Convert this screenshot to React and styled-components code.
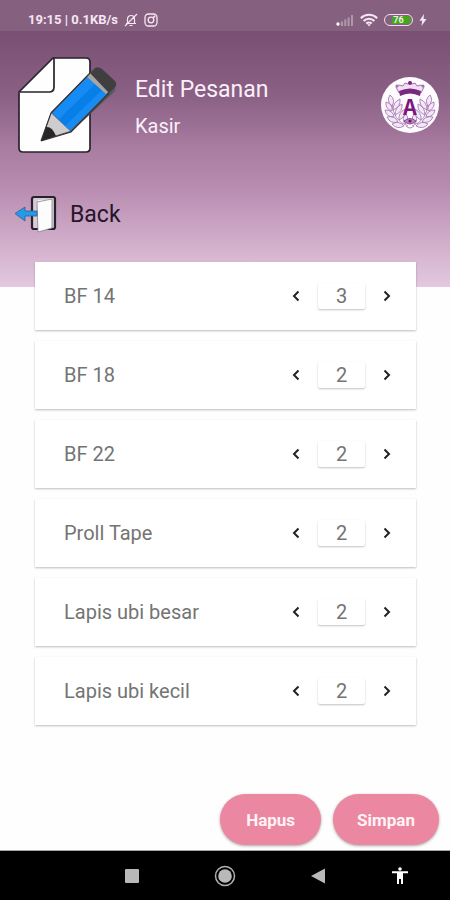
import * as React from "react";
import {useState} from "react";
import styled, {createGlobalStyle} from "styled-components";

const GlobalStyle = createGlobalStyle`
  *, *::before, *::after {
    box-sizing: border-box;
  }
  body {
    margin: 0;
    background: #fefefe;
    font-family: Roboto, "Liberation Sans", sans-serif;
  }
  button, input {
    font-family: inherit;
  }
`;

const Screen = styled.div`
  display: flex;
  flex-direction: column;
  min-height: 100vh;
`;

const StatusBar = styled.div`
  display: flex;
  justify-content: space-between;
  align-items: center;
  height: 31px;
  padding: 8px 23px 0 28px;
  background: #86617f;
  color: #f6e6f4;
  font-size: 13px;
  line-height: 16px;
  font-weight: 700;
`;

const StatusGroup = styled.div`
  display: flex;
  align-items: center;
  gap: 6px;
`;

const Battery = styled.span`
  display: flex;
  justify-content: center;
  width: 29px;
  height: 12px;
  border: 1px solid #f0dcee;
  border-radius: 6px;
  background: linear-gradient(to right, transparent 7px, #43a61c 7px);
  background-clip: content-box;
  padding: 1px;
  font-size: 9px;
  line-height: 9px;
`;

const Header = styled.header`
  display: flex;
  flex-direction: column;
  height: 256px;
  padding: 24px 11px 0 14px;
  background: linear-gradient(
    #795072 0%,
    #8a6084 25%,
    #a87ba1 45%,
    #b98db1 62%,
    #d5b3cf 86%,
    #e2c8e0 100%
  );
`;

const TitleRow = styled.div`
  display: flex;
  align-items: center;
  gap: 16px;
`;

const Titles = styled.div`
  flex: 1;
  padding-top: 4px;
  color: #fbeffa;
`;

const Title = styled.h1`
  margin: 0;
  font-size: 23px;
  line-height: 32px;
  font-weight: 400;
`;

const Role = styled.p`
  margin: 6px 0 0;
  font-size: 20px;
  line-height: 28px;
`;

const BackLink = styled.a`
  display: flex;
  align-items: center;
  align-self: flex-start;
  gap: 13px;
  margin-top: 40px;
  color: #26162a;
  font-size: 23px;
  line-height: 40px;
  text-decoration: none;
`;

const OrderList = styled.ul`
  display: flex;
  flex-direction: column;
  gap: 11px;
  margin: -25px 34px 0 35px;
  padding: 0;
  list-style: none;
`;

const OrderItem = styled.li`
  display: flex;
  align-items: center;
  justify-content: space-between;
  height: 68px;
  padding: 0 14px 0 29px;
  background: #fff;
  box-shadow: 0 1px 2px rgba(0, 0, 0, 0.26);
`;

const ItemName = styled.label`
  color: #747474;
  font-size: 20px;
  line-height: 28px;
`;

const Stepper = styled.div`
  display: flex;
  align-items: center;
  gap: 7px;
`;

const StepButton = styled.button`
  display: flex;
  align-items: center;
  justify-content: center;
  width: 30px;
  height: 32px;
  padding: 0;
  border: 0;
  background: none;
  color: #222;
  cursor: pointer;
`;

const Quantity = styled.input`
  width: 47px;
  height: 26px;
  padding: 0;
  border: 0;
  border-radius: 2px;
  background: #fff;
  box-shadow: 0 1px 2px rgba(0, 0, 0, 0.24);
  color: #747474;
  font-size: 20px;
  text-align: center;
`;

const Actions = styled.div`
  display: flex;
  justify-content: flex-end;
  gap: 12px;
  margin-top: auto;
  padding: 24px 11px 5px;
`;

const ActionButton = styled.button`
  height: 51px;
  padding: 0 ${(props) => props.$pad}px;
  border: 0;
  border-radius: 26px;
  background: #ec87a1;
  box-shadow: 0 1px 3px rgba(0, 0, 0, 0.35);
  color: #fff3f6;
  font-size: 17px;
  font-weight: 700;
  cursor: pointer;
`;

const NavBar = styled.nav`
  display: flex;
  align-items: center;
  justify-content: space-between;
  height: 50px;
  padding: 0 34px 0 116px;
  border-top: 1px solid #a3a7a3;
  background: #000;
`;

const NavGroup = styled.div`
  display: flex;
  gap: 61px;
`;

const NavButton = styled.button`
  display: flex;
  align-items: center;
  justify-content: center;
  width: 32px;
  height: 32px;
  padding: 0;
  border: 0;
  background: none;
`;

function MutedBellIcon() {
    return (
        <svg width="14" height="14" viewBox="0 0 14 14" fill="none" stroke="currentColor" strokeWidth="1.2" aria-hidden="true">
            <path d="M2 10.5h10M3.5 10.5V6a3.5 3.5 0 0 1 7 0v4.500M5.500 12.500h3M1 13 13 1"/>
        </svg>
    );
}

function CameraIcon() {
    return (
        <svg width="14" height="14" viewBox="0 0 14 14" fill="none" stroke="currentColor" strokeWidth="1.3" aria-hidden="true">
            <rect x="1" y="1" width="12" height="12" rx="3.500"/>
            <circle cx="7" cy="7" r="2.800"/>
            <circle cx="10.300" cy="3.700" r="0.500"/>
        </svg>
    );
}

function SignalIcon() {
    return (
        <svg width="18" height="12" viewBox="0 0 18 12" fill="#fff" aria-hidden="true">
            <circle cx="2" cy="10" r="1.700"/>
            <g opacity="0.35">
                <rect x="5" y="7.500" width="2" height="4.500"/>
                <rect x="8.300" y="5.500" width="2" height="6.500"/>
                <rect x="11.600" y="3.500" width="2" height="8.500"/>
                <rect x="15" y="1" width="2" height="11"/>
            </g>
        </svg>
    );
}

function WifiIcon() {
    return (
        <svg width="18" height="14" viewBox="0 0 18 14" fill="none" stroke="currentColor" strokeWidth="2.100" aria-hidden="true">
            <path d="M0.800 5.200a11.600 11.600 0 0 1 16.400 0M3.600 8a7.600 7.600 0 0 1 10.800 0M6.300 10.600a3.800 3.800 0 0 1 5.400 0"/>
            <path d="M7.200 11.200h3.600L9 13.400z" fill="currentColor" stroke="none"/>
        </svg>
    );
}

function BoltIcon() {
    return (
        <svg width="8" height="12" viewBox="0 0 8 12" fill="currentColor" aria-hidden="true">
            <path d="M5 0 0.500 6.800h2.700L2.500 12 7.500 5H4.600z"/>
        </svg>
    );
}

function EditIcon() {
    return (
        <svg width="105" height="100" viewBox="0 0 105 100" aria-hidden="true">
            <path
                d="M39 3h33q4 0 4 4v86q0 4-4 4H9q-4 0-4-4V37z"
                fill="#fefefe"
                stroke="#29232b"
                strokeWidth="1.700"
                strokeLinejoin="round"
            />
            <path d="M40 3v29q0 5-5 5H6" fill="none" stroke="#29232b" strokeWidth="1.700"/>
            <path d="M27 86 37 57 75 19q4-5 10-3l13 12q6 5 1 10L57 77z" fill="#55595d"/>
            <path d="M38 58 73 22 93 39 56 76z" fill="#168bf4"/>
            <path d="M45 64 81 29l7 6-37 36z" fill="#087ee9"/>
            <path d="M73 22l3-4 20 17-4 4z" fill="#a8a5a3"/>
            <path d="M76 18l5-5q3-2 7 1l13 12q3 4-1 7l-5 5z" fill="#403f40"/>
            <path d="M37 58 56 76 40 81 32 73z" fill="#cfcccd"/>
            <path d="M32 72q6-1 10 9L27 86z" fill="#29262a"/>
            <path d="M27 86 37 58 76 18M27 86l30-9 38-39" fill="none" stroke="#373438" strokeWidth="1.200"/>
        </svg>
    );
}

function DoorIcon() {
    return (
        <svg width="43" height="40" viewBox="0 0 43 40" aria-hidden="true">
            <rect x="18" y="2" width="23" height="32" rx="2" fill="#d6cbd6" stroke="#26212a" strokeWidth="2.200"/>
            <path d="M24 5q8 0 14-1v29l-14 4z" fill="#f7f7f7"/>
            <path d="M23 7 38 4v29l-14 4z" fill="#fcfcfc" stroke="#77727a" strokeWidth="0.700"/>
            <path d="M1 18.500 11 12v4h12v5H11v5z" fill="#2699eb" stroke="#28638e" strokeWidth="0.800"/>
        </svg>
    );
}

// One side of the laurel wreath, mirrored for the other side
function Laurel() {
    return (
        <g fill="#f3e6f6" stroke="#a87db4" strokeWidth="0.900">
            <path d="M27 49Q12 44 11 26" fill="none"/>
            <path d="M11 29q-6-5-2-11 6 5 2 11zM11 34q-7-2-6-9 7 2 6 9zM13 40q-8 0-9-7 8 0 9 7zM17 45q-8 2-11-5 8-2 11 5zM23 49q-7 4-12-2 7-4 12 2z"/>
            <path d="M12 33q0-8 7-11 1 8-7 11zM14 38q0-8 7-11 1 8-7 11zM18 43q-1-7 6-11 1 8-6 11zM24 47q-4-6 1-10 4 6-1 10z"/>
        </g>
    );
}

function Crest() {
    return (
        <svg width="58" height="56" viewBox="0 0 58 56" role="img" aria-label="A">
            <ellipse cx="29" cy="28" rx="29" ry="28" fill="#fdfbfd"/>
            <Laurel/>
            <g transform="matrix(-1 0 0 1 58 0)">
                <Laurel/>
            </g>
            <path d="M18 16q11-6 22 0l3-6-3-2-4 1-2-3-3 1-2-3-2 3-3-1-2 3-4-1-3 2z" fill="#efe0f1" stroke="#9a67a5" strokeWidth="0.900"/>
            <path d="M18 14q11-5 22 0l-1 5q-10-5-20 0z" fill="#7d287f"/>
            <circle cx="29" cy="6" r="2" fill="#7d287f"/>
            <circle cx="16" cy="9" r="1.500" fill="#a273ad"/>
            <circle cx="42" cy="9" r="1.500" fill="#a273ad"/>
            <text x="29" y="38" textAnchor="middle" fontFamily="Liberation Sans Narrow, Liberation Mono, monospace" fontSize="23" fontWeight="700" fill="#7d167e">A</text>
            <path d="M23 44q6-5 12 0-6 6-12 0z" fill="#b48bbc" stroke="#7d287f" strokeWidth="0.800"/>
            <circle cx="29" cy="44" r="1.600" fill="#6f176f"/>
            <path d="M25 49q4 4 8 0" fill="none" stroke="#b48bbc"/>
        </svg>
    );
}

function Chevron({next}) {
    return (
        <svg width="8" height="12" viewBox="0 0 8 12" fill="none" stroke="currentColor" strokeWidth="2" aria-hidden="true">
            <path d={next ? "M1.500 1.500 6 6l-4.500 4.500" : "M6.500 1.500 2 6l4.500 4.500"}/>
        </svg>
    );
}

const initialOrders = [
    {id: "bf14", name: "BF 14", quantity: 3},
    {id: "bf18", name: "BF 18", quantity: 2},
    {id: "bf22", name: "BF 22", quantity: 2},
    {id: "proll", name: "Proll Tape", quantity: 2},
    {id: "lapis-besar", name: "Lapis ubi besar", quantity: 2},
    {id: "lapis-kecil", name: "Lapis ubi kecil", quantity: 2},
];

export default function App() {
    const [orders, setOrders] = useState(initialOrders);

    const setQuantity = (id, quantity) => {
        setOrders(orders.map((el) => (el.id === id ? {...el, quantity: Math.max(0, quantity)} : el)));
    };

    return (
        <Screen>
            <GlobalStyle/>
            <StatusBar>
                <StatusGroup>
                    <span>19:15 | 0.1KB/s</span>
                    <MutedBellIcon/>
                    <CameraIcon/>
                </StatusGroup>
                <StatusGroup>
                    <SignalIcon/>
                    <WifiIcon/>
                    <Battery>76</Battery>
                    <BoltIcon/>
                </StatusGroup>
            </StatusBar>
            <Header>
                <TitleRow>
                    <EditIcon/>
                    <Titles>
                        <Title>Edit Pesanan</Title>
                        <Role>Kasir</Role>
                    </Titles>
                    <Crest/>
                </TitleRow>
                <BackLink href="#">
                    <DoorIcon/>
                    Back
                </BackLink>
            </Header>
            <OrderList>
                {orders.map((el) => (
                    <OrderItem key={el.id}>
                        <ItemName htmlFor={el.id}>{el.name}</ItemName>
                        <Stepper>
                            <StepButton type="button" aria-label="Kurangi" onClick={() => setQuantity(el.id, el.quantity - 1)}>
                                <Chevron/>
                            </StepButton>
                            <Quantity
                                id={el.id}
                                inputMode="numeric"
                                value={el.quantity}
                                onChange={(e) => setQuantity(el.id, Number(e.target.value) || 0)}
                            />
                            <StepButton type="button" aria-label="Tambah" onClick={() => setQuantity(el.id, el.quantity + 1)}>
                                <Chevron next/>
                            </StepButton>
                        </Stepper>
                    </OrderItem>
                ))}
            </OrderList>
            <Actions>
                <ActionButton type="button" $pad={26}>Hapus</ActionButton>
                <ActionButton type="button" $pad={24}>Simpan</ActionButton>
            </Actions>
            <NavBar>
                <NavGroup>
                    <NavButton type="button" aria-label="Recent apps">
                        <svg width="14" height="14" viewBox="0 0 14 14">
                            <rect width="14" height="14" rx="1" fill="#b9b9b9"/>
                        </svg>
                    </NavButton>
                    <NavButton type="button" aria-label="Home">
                        <svg width="22" height="22" viewBox="0 0 22 22">
                            <circle cx="11" cy="11" r="9.500" fill="none" stroke="#b0b0b0" strokeWidth="1.500"/>
                            <circle cx="11" cy="11" r="6.800" fill="#b9b9b9"/>
                        </svg>
                    </NavButton>
                    <NavButton type="button" aria-label="Back">
                        <svg width="14" height="16" viewBox="0 0 14 16">
                            <path d="M0 8 14 0.500v15z" fill="#b9b9b9"/>
                        </svg>
                    </NavButton>
                </NavGroup>
                <NavButton type="button" aria-label="Accessibility">
                    <svg width="16" height="18" viewBox="0 0 16 18" fill="#fff">
                        <circle cx="8" cy="2" r="1.800"/>
                        <path d="M0 4.300h16v1.900h-5V17H9v-5H7v5H5V6.200H0z"/>
                    </svg>
                </NavButton>
            </NavBar>
        </Screen>
    );
}
